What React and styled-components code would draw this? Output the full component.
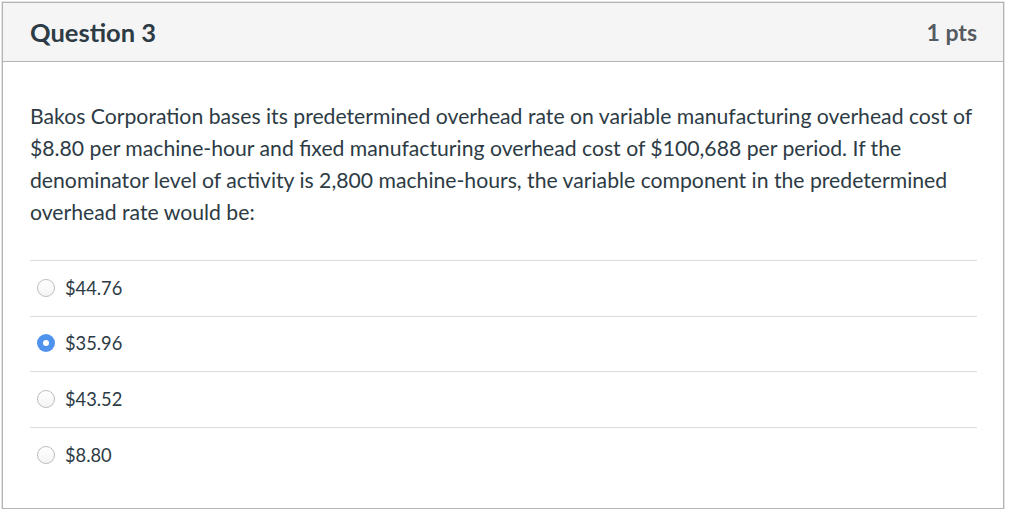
import React, { useState } from "react";
import styled, { createGlobalStyle } from "styled-components";

const GlobalStyle = createGlobalStyle`
  html, body {
    margin: 0;
    padding: 0;
    background: #ffffff;
  }
  body {
    font-family: Lato, "Open Sans", sans-serif;
    color: #2d3b45;
  }
`;

const Page = styled.div`
  padding: 2px 19px 0 2px;
`;

const Panel = styled.div`
  width: 1000px;
  height: 505px;
  border: 1px solid #b4b4b4;
  box-shadow: 0 0 0 0.5px #c8c8c8;
  background: #fff;
  display: flex;
  flex-direction: column;
`;

const Header = styled.div`
  height: 58px;
  background: #f5f5f5;
  border-bottom: 1px solid #b4b4b4;
  display: flex;
  align-items: center;
  justify-content: space-between;
  padding: 0 26px 0 27px;
`;

const Title = styled.h2`
  margin: 0;
  font-size: 25.5px;
  font-weight: 700;
  color: #2d3b45;
`;

const Points = styled.span`
  font-size: 23px;
  font-weight: 700;
  color: #555b60;
`;

const Body = styled.div`
  padding: 38px 26px 0 27px;
`;

const QuestionText = styled.p`
  margin: 0 0 32px;
  font-size: 21.2px;
  line-height: 32px;
  color: #2d3b45;
`;

const Answers = styled.div`
  border-top: 1px solid #dcdcdc;
`;

const Answer = styled.label`
  display: flex;
  align-items: center;
  gap: 10px;
  height: 54.6px;
  padding-left: 7px;
  padding-bottom: 1px;
  box-sizing: border-box;
  height: 55.6px;
  border-bottom: ${(p) => (p.last ? "none" : "1px solid #dcdcdc")};
  font-size: 18.3px;
  color: #2d3b45;
  cursor: pointer;
`;

const Radio = styled.span`
  width: 18px;
  height: 18px;
  box-sizing: border-box;
  border-radius: 50%;
  flex-shrink: 0;
  display: flex;
  align-items: center;
  justify-content: center;
  border: ${(p) => (p.checked ? "none" : "1px solid #bdbdbd")};
  background: ${(p) =>
    p.checked ? "#4f93ef" : "linear-gradient(#ffffff, #f4f4f4)"};
  &::after {
    content: "";
    display: ${(p) => (p.checked ? "block" : "none")};
    width: 6px;
    height: 6px;
    border-radius: 50%;
    background: #fff;
  }
`;

const options = ["$44.76", "$35.96", "$43.52", "$8.80"];

export default function App() {
  const [selected, setSelected] = useState(1);
  return (
    <>
      <GlobalStyle />
      <Page>
        <Panel>
          <Header>
            <Title>Question 3</Title>
            <Points>1 pts</Points>
          </Header>
          <Body>
            <QuestionText>
              Bakos Corporation bases its predetermined overhead rate on variable
              manufacturing overhead cost of $8.80 per machine-hour and fixed
              manufacturing overhead cost of $100,688 per period. If the
              denominator level of activity is 2,800 machine-hours, the variable
              component in the predetermined overhead rate would be:
            </QuestionText>
            <Answers>
              {options.map((opt, i) => (
                <Answer
                  key={opt}
                  last={i === options.length - 1}
                  onClick={() => setSelected(i)}
                >
                  <Radio checked={selected === i} />
                  {opt}
                </Answer>
              ))}
            </Answers>
          </Body>
        </Panel>
      </Page>
    </>
  );
}
